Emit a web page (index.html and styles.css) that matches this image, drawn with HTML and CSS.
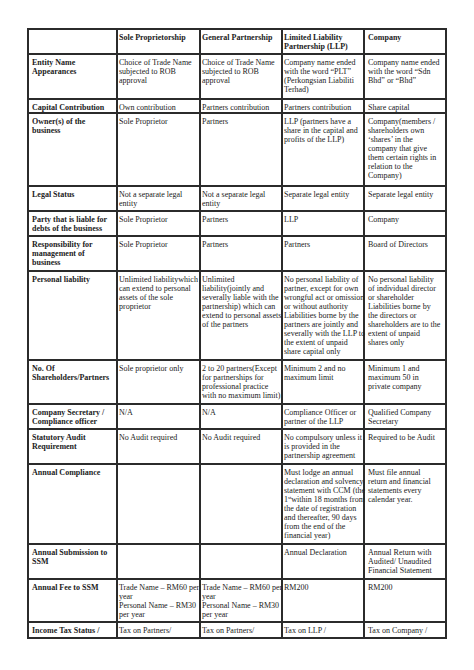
FILE: index.html
```html
<!DOCTYPE html>
<html>
<head>
<meta charset="utf-8">
<link rel="stylesheet" href="styles.css">
</head>
<body>
<table class="grid">
<colgroup>
<col class="c1"><col class="c2"><col class="c3"><col class="c4"><col class="c5">
</colgroup>
<tr class="r-head">
<th></th>
<th>Sole Proprietorship</th>
<th>General Partnership</th>
<th>Limited Liability<br>Partnership (LLP)</th>
<th>Company</th>
</tr>
<tr class="r-entity">
<th>Entity Name<br>Appearances</th>
<td>Choice of Trade Name<br>subjected to ROB<br>approval</td>
<td>Choice of Trade Name<br>subjected to ROB<br>approval</td>
<td>Company name ended<br>with the word “PLT”<br>(Perkongsian Liabiliti<br>Terhad)</td>
<td>Company name ended<br>with the word “Sdn<br>Bhd” or “Bhd”</td>
</tr>
<tr class="r-capital">
<th>Capital Contribution</th>
<td>Own contribution</td>
<td>Partners contribution</td>
<td>Partners contribution</td>
<td>Share capital</td>
</tr>
<tr class="r-owner">
<th>Owner(s) of the<br>business</th>
<td>Sole Proprietor</td>
<td>Partners</td>
<td>LLP (partners have a<br>share in the capital and<br>profits of the LLP)</td>
<td>Company(members /<br>shareholders own<br>‘shares’ in the<br>company that give<br>them certain rights in<br>relation to the<br>Company)</td>
</tr>
<tr class="r-legal">
<th>Legal Status</th>
<td>Not a separate legal<br>entity</td>
<td>Not a separate legal<br>entity</td>
<td>Separate legal entity</td>
<td>Separate legal entity</td>
</tr>
<tr class="r-party">
<th>Party that is liable for<br>debts of the business</th>
<td>Sole Proprietor</td>
<td>Partners</td>
<td>LLP</td>
<td>Company</td>
</tr>
<tr class="r-resp">
<th>Responsibility for<br>management of<br>business</th>
<td>Sole Proprietor</td>
<td>Partners</td>
<td>Partners</td>
<td>Board of Directors</td>
</tr>
<tr class="r-personal">
<th>Personal liability</th>
<td>Unlimited liabilitywhich<br>can extend to personal<br>assets of the sole<br>proprietor</td>
<td>Unlimited<br>liability(jointly and<br>severally liable with the<br>partnership) which can<br>extend to personal assets<br>of the partners</td>
<td>No personal liability of<br>partner, except for own<br>wrongful act or omission<br>or without authority<br>Liabilities borne by the<br>partners are jointly and<br>severally with the LLP to<br>the extent of unpaid<br>share capital only</td>
<td>No personal liability<br>of individual director<br>or shareholder<br>Liabilities borne by<br>the directors or<br>shareholders are to the<br>extent of unpaid<br>shares only</td>
</tr>
<tr class="r-number">
<th>No. Of<br>Shareholders/Partners</th>
<td>Sole proprietor only</td>
<td>2 to 20 partners(Except<br>for partnerships for<br>professional practice<br>with no maximum limit)</td>
<td>Minimum 2 and no<br>maximum limit</td>
<td>Minimum 1 and<br>maximum 50 in<br>private company</td>
</tr>
<tr class="r-secretary">
<th>Company Secretary /<br>Compliance officer</th>
<td>N/A</td>
<td>N/A</td>
<td>Compliance Officer or<br>partner of the LLP</td>
<td>Qualified Company<br>Secretary</td>
</tr>
<tr class="r-audit">
<th>Statutory Audit<br>Requirement</th>
<td>No Audit required</td>
<td>No Audit required</td>
<td>No compulsory unless it<br>is provided in the<br>partnership agreement</td>
<td>Required to be Audit</td>
</tr>
<tr class="r-compliance">
<th>Annual Compliance</th>
<td></td>
<td></td>
<td>Must lodge an annual<br>declaration and solvency<br>statement with CCM (the<br>1<sup class="ord">st</sup>within 18 months from<br>the date of registration<br>and thereafter, 90 days<br>from the end of the<br>financial year)</td>
<td>Must file annual<br>return and financial<br>statements every<br>calendar year.</td>
</tr>
<tr class="r-submission">
<th>Annual Submission to<br>SSM</th>
<td></td>
<td></td>
<td>Annual Declaration</td>
<td>Annual Return with<br>Audited/ Unaudited<br>Financial Statement</td>
</tr>
<tr class="r-fee">
<th>Annual Fee to SSM</th>
<td>Trade Name – RM60 per<br>year<br>Personal Name – RM30<br>per year</td>
<td>Trade Name – RM60 per<br>year<br>Personal Name – RM30<br>per year</td>
<td>RM200</td>
<td>RM200</td>
</tr>
<tr class="r-tax">
<th>Income Tax Status /</th>
<td>Tax on Partners/</td>
<td>Tax on Partners/</td>
<td>Tax on LLP /</td>
<td>Tax on Company /</td>
</tr>
</table>
</body>
</html>
```
FILE: styles.css
```css
html, body {
  margin: 0;
  padding: 0;
  background: #ffffff;
}

body {
  font-family: "Liberation Serif", "Times New Roman", serif;
  font-size: 8px;
  line-height: 9px;
  color: #222222;
}

.grid {
  border-collapse: collapse;
  table-layout: fixed;
  margin: 28px 0 0 27px;
  width: 418px;
}

.c1 { width: 89px; }
.c2 { width: 83px; }
.c3 { width: 82px; }
.c4 { width: 82px; }
.c5 { width: 82px; }

.grid th,
.grid td {
  border: 2px solid #2b2b2b;
  vertical-align: top;
  text-align: left;
  white-space: nowrap;
  overflow: visible;
  padding: 3px 0 0 1px;
}

.grid th {
  font-weight: bold;
}

.grid tr > :first-child {
  padding-left: 3px;
}

.grid tr > :last-child {
  padding-left: 3px;
}

.ord {
  font-size: 5px;
  line-height: 0;
  vertical-align: 3px;
}

.r-head { height: 25px; }
.r-entity { height: 45px; }
.r-capital { height: 14px; }
.r-owner { height: 73px; }
.r-legal { height: 25px; }
.r-party { height: 25px; }
.r-resp { height: 35px; }
.r-personal { height: 89px; }
.r-number { height: 44px; }
.r-secretary { height: 25px; }
.r-audit { height: 35px; }
.r-compliance { height: 80px; }
.r-submission { height: 35px; }
.r-fee { height: 43px; }
.r-tax { height: 16px; }
```
